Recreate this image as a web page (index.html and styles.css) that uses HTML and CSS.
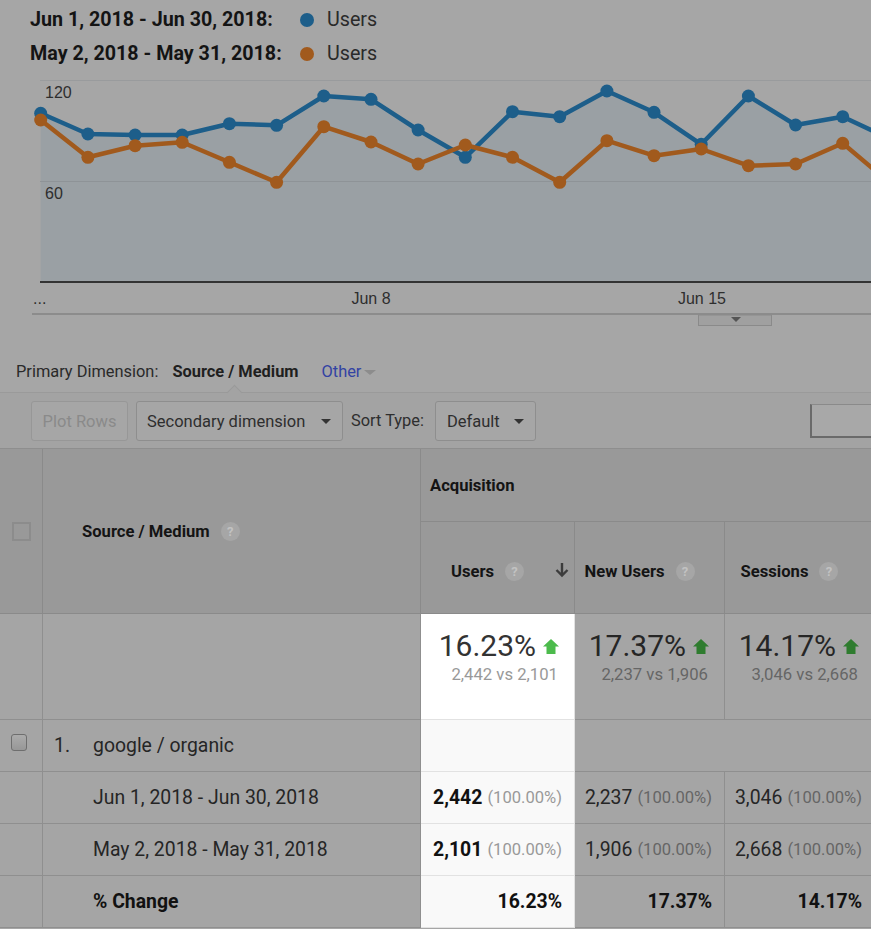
FILE: index.html
```html
<!DOCTYPE html>
<html>
<head>
<meta charset="utf-8">
<title>Acquisition report</title>
<link rel="stylesheet" href="styles.css">
</head>
<body>
<div class="page">
  <div class="legend">
    <div class="lg-label">Jun 1, 2018 - Jun 30, 2018:</div>
    <div class="lg-series"><span class="dot dot-blue"></span>Users</div>
    <div class="lg-label">May 2, 2018 - May 31, 2018:</div>
    <div class="lg-series"><span class="dot dot-orange"></span>Users</div>
  </div>

  <div class="chart">
    <svg class="chart-svg" width="871" height="260" viewBox="0 70 871 260" xmlns="http://www.w3.org/2000/svg">
      <line x1="40" y1="80.5" x2="871" y2="80.5" stroke="#999b9d" stroke-width="1"/>
      <path d="M40.7,282 L40.7,113.3 L87.9,134 L135.1,135 L182.2,135 L229.4,123.7 L276.6,125.3 L323.8,96 L371,99.3 L418.1,130 L465.3,157.3 L512.5,111.7 L559.7,116.7 L606.9,91 L654,112.3 L701.2,144.3 L748.4,96 L795.6,125 L842.7,116.7 L889.9,139 L889.9,282 Z" fill="#9aa0a4"/>
      <line x1="40" y1="181.5" x2="871" y2="181.5" stroke="#8e9397" stroke-width="1"/>
      <line x1="40" y1="282" x2="871" y2="282" stroke="#333333" stroke-width="2"/>
      <polyline fill="none" stroke="#1d5e8a" stroke-width="4.5" stroke-linejoin="round" points="40.7,113.3 87.9,134 135.1,135 182.2,135 229.4,123.7 276.6,125.3 323.8,96 371,99.3 418.1,130 465.3,157.3 512.5,111.7 559.7,116.7 606.9,91 654,112.3 701.2,144.3 748.4,96 795.6,125 842.7,116.7 889.9,139"/>
      <g fill="#1d5e8a">
        <circle cx="40.7" cy="113.3" r="6.5"/><circle cx="87.9" cy="134" r="6.5"/><circle cx="135.1" cy="135" r="6.5"/><circle cx="182.2" cy="135" r="6.5"/><circle cx="229.4" cy="123.7" r="6.5"/><circle cx="276.6" cy="125.3" r="6.5"/><circle cx="323.8" cy="96" r="6.5"/><circle cx="371" cy="99.3" r="6.5"/><circle cx="418.1" cy="130" r="6.5"/><circle cx="465.3" cy="157.3" r="6.5"/><circle cx="512.5" cy="111.7" r="6.5"/><circle cx="559.7" cy="116.7" r="6.5"/><circle cx="606.9" cy="91" r="6.5"/><circle cx="654" cy="112.3" r="6.5"/><circle cx="701.2" cy="144.3" r="6.5"/><circle cx="748.4" cy="96" r="6.5"/><circle cx="795.6" cy="125" r="6.5"/><circle cx="842.7" cy="116.7" r="6.5"/>
      </g>
      <polyline fill="none" stroke="#a15a1d" stroke-width="4.5" stroke-linejoin="round" points="40.7,120 87.9,157.3 135.1,145.7 182.2,142.3 229.4,162.3 276.6,182.3 323.8,126.7 371,142 418.1,164 465.3,145 512.5,157.3 559.7,182.3 606.9,140.7 654,155.7 701.2,149 748.4,165.7 795.6,164 842.7,143.3 889.9,183"/>
      <g fill="#a15a1d">
        <circle cx="40.7" cy="120" r="6.5"/><circle cx="87.9" cy="157.3" r="6.5"/><circle cx="135.1" cy="145.7" r="6.5"/><circle cx="182.2" cy="142.3" r="6.5"/><circle cx="229.4" cy="162.3" r="6.5"/><circle cx="276.6" cy="182.3" r="6.5"/><circle cx="323.8" cy="126.7" r="6.5"/><circle cx="371" cy="142" r="6.5"/><circle cx="418.1" cy="164" r="6.5"/><circle cx="465.3" cy="145" r="6.5"/><circle cx="512.5" cy="157.3" r="6.5"/><circle cx="559.7" cy="182.3" r="6.5"/><circle cx="606.9" cy="140.7" r="6.5"/><circle cx="654" cy="155.7" r="6.5"/><circle cx="701.2" cy="149" r="6.5"/><circle cx="748.4" cy="165.7" r="6.5"/><circle cx="795.6" cy="164" r="6.5"/><circle cx="842.7" cy="143.3" r="6.5"/>
      </g>
      <text class="axis" x="45" y="98">120</text>
      <text class="axis" x="45" y="199">60</text>
      <text class="axis" x="33" y="304">...</text>
      <text class="axis" x="371" y="304" text-anchor="middle">Jun 8</text>
      <text class="axis" x="702" y="304" text-anchor="middle">Jun 15</text>
      <line x1="32" y1="314" x2="871" y2="314" stroke="#8c8c8c" stroke-width="2"/>
      <rect x="698.5" y="315" width="73" height="10.5" fill="#a0a0a0" stroke="#8a8a8a" stroke-width="1"/>
      <polygon points="731,317 741,317 736,322" fill="#555555"/>
    </svg>
  </div>

  <div class="primary">
    <span class="pd-label">Primary Dimension:</span>
    <span class="pd-current">Source / Medium</span>
    <span class="pd-other">Other<span class="caret caret-light"></span></span>
    <span class="notch"></span>
  </div>

  <div class="toolbar">
    <button class="btn btn-disabled">Plot Rows</button>
    <button class="btn btn-select btn-secondary">Secondary dimension<span class="caret"></span></button>
    <span class="tb-label">Sort Type:</span>
    <button class="btn btn-select btn-default">Default<span class="caret"></span></button>
    <span class="search"></span>
  </div>

  <div class="tbl">
    <div class="cell hd h-cb"><span class="cbox"></span></div>
    <div class="cell hd h-dim">Source / Medium<span class="help">?</span></div>
    <div class="cell hd h-group">Acquisition</div>
    <div class="cell hd h-metric h-users">Users<span class="help">?</span>
      <svg class="sort-arrow" width="14" height="16" viewBox="0 0 14 16"><path d="M7 1 V13 M1.5 8 L7 13.5 L12.5 8" fill="none" stroke="#3c3c3c" stroke-width="2.4"/></svg>
    </div>
    <div class="cell hd h-metric">New Users<span class="help">?</span></div>
    <div class="cell hd h-metric">Sessions<span class="help">?</span></div>

    <div class="cell body"></div>
    <div class="cell body"></div>
    <div class="cell sum sel-top">
      <div class="big">16.23%<svg class="up up-bright" width="16" height="15" viewBox="0 0 16 15"><polygon points="8,0 16,7.5 12.5,7.5 12.5,15 3.5,15 3.5,7.5 0,7.5"/></svg></div>
      <div class="vs">2,442 vs 2,101</div>
    </div>
    <div class="cell sum body">
      <div class="big">17.37%<svg class="up" width="16" height="15" viewBox="0 0 16 15"><polygon points="8,0 16,7.5 12.5,7.5 12.5,15 3.5,15 3.5,7.5 0,7.5"/></svg></div>
      <div class="vs">2,237 vs 1,906</div>
    </div>
    <div class="cell sum body">
      <div class="big">14.17%<svg class="up" width="16" height="15" viewBox="0 0 16 15"><polygon points="8,0 16,7.5 12.5,7.5 12.5,15 3.5,15 3.5,7.5 0,7.5"/></svg></div>
      <div class="vs">3,046 vs 2,668</div>
    </div>

    <div class="cell body c-cb"><span class="rbox"></span></div>
    <div class="cell body dimtxt"><span class="idx">1.</span>google / organic</div>
    <div class="cell sel"></div>
    <div class="cell body span2"></div>

    <div class="cell body"></div>
    <div class="cell body dimtxt indent">Jun 1, 2018 - Jun 30, 2018</div>
    <div class="cell sel num"><b>2,442</b><span class="pct">(100.00%)</span></div>
    <div class="cell body num">2,237<span class="pct">(100.00%)</span></div>
    <div class="cell body num">3,046<span class="pct">(100.00%)</span></div>

    <div class="cell body"></div>
    <div class="cell body dimtxt indent">May 2, 2018 - May 31, 2018</div>
    <div class="cell sel num"><b>2,101</b><span class="pct">(100.00%)</span></div>
    <div class="cell body num">1,906<span class="pct">(100.00%)</span></div>
    <div class="cell body num">2,668<span class="pct">(100.00%)</span></div>

    <div class="cell body"></div>
    <div class="cell body dimtxt indent"><b>% Change</b></div>
    <div class="cell sel num"><b>16.23%</b></div>
    <div class="cell body num"><b>17.37%</b></div>
    <div class="cell body num"><b>14.17%</b></div>
  </div>
</div>
</body>
</html>
```

FILE: styles.css
```css
html, body {
  margin: 0;
  padding: 0;
  overflow: hidden;
  background: #a6a6a6;
}
body {
  font-family: Roboto, "Liberation Sans", Arial, sans-serif;
  color: #2a2a2a;
}
.page {
  width: 875px;
}

/* legend */
.legend {
  display: grid;
  grid-template-columns: 270px auto;
  padding: 3px 0 0 30px;
  height: 70px;
  box-sizing: border-box;
  font-size: 19.7px;
  line-height: 34px;
}
.lg-label {
  font-weight: 700;
  color: #141414;
}
.lg-series {
  display: flex;
  align-items: center;
  color: #2a2a2a;
}
.dot {
  width: 14px;
  height: 14px;
  border-radius: 50%;
  margin-right: 13px;
}
.dot-blue { background: #1d5e8a; }
.dot-orange { background: #a15a1d; }

/* chart */
.chart {
  height: 260px;
}
.chart-svg {
  display: block;
}
.axis {
  font-family: "Liberation Sans", Arial, sans-serif;
  font-size: 16px;
  fill: #2e2e2e;
}

/* primary dimension */
.primary {
  position: relative;
  height: 63px;
  box-sizing: border-box;
  padding: 0 0 10px 16px;
  display: flex;
  align-items: flex-end;
  font-size: 16.4px;
  line-height: 20px;
  border-bottom: 1px solid #9a9a9a;
}
.pd-label { color: #2a2a2a; }
.pd-current {
  margin-left: 14px;
  font-weight: 700;
  color: #1f1f1f;
}
.pd-other {
  margin-left: 23px;
  color: #3343a3;
  display: flex;
  align-items: center;
}
.caret {
  display: inline-block;
  width: 0;
  height: 0;
  border-left: 5px solid transparent;
  border-right: 5px solid transparent;
  border-top: 5px solid #333;
}
.caret-light {
  border-left-width: 6px;
  border-right-width: 6px;
  border-top-color: #8c8c8c;
  margin-left: 3px;
}
.notch {
  position: absolute;
  left: 229px;
  bottom: -6px;
  width: 10px;
  height: 10px;
  background: #a3a3a3;
  border-top: 1px solid #9a9a9a;
  border-left: 1px solid #9a9a9a;
  transform: rotate(45deg);
}

/* toolbar */
.toolbar {
  height: 56px;
  box-sizing: border-box;
  padding: 8px 0 0 31px;
  display: flex;
  align-items: flex-start;
  background: #a3a3a3;
  border-bottom: 1px solid #8e8e8e;
}
.btn {
  height: 40px;
  box-sizing: border-box;
  border: 1px solid #8e8e8e;
  border-radius: 3px;
  background: #a6a6a6;
  font-family: Roboto, "Liberation Sans", Arial, sans-serif;
  font-size: 16.5px;
  color: #2e2e2e;
  padding: 0 10px;
  display: flex;
  align-items: center;
}
.btn-disabled {
  width: 97px;
  justify-content: center;
  color: #8a8a8a;
  border-color: #979797;
}
.btn-select {
  justify-content: space-between;
}
.btn-secondary {
  width: 207px;
  margin-left: 8px;
  padding: 0 11px 0 10px;
}
.btn-default {
  width: 101px;
  margin-left: 11px;
  padding: 0 11px 0 11px;
}
.tb-label {
  margin-left: 8px;
  height: 40px;
  line-height: 40px;
  font-size: 16.4px;
  color: #2e2e2e;
}
.search {
  margin-left: auto;
  margin-top: 3px;
  width: 65px;
  height: 34px;
  box-sizing: border-box;
  background: #a8a8a8;
  border: 1px solid #8a8a8a;
  border-left: 2px solid #6a6a6a;
  border-bottom: 2px solid #6a6a6a;
}

/* table */
.tbl {
  display: grid;
  grid-template-columns: 43px 378px 154px 150px 150px;
  grid-template-rows: 73px 92px 106px 52px 52px 52px 52px;
}
.cell {
  box-sizing: border-box;
  border-right: 1px solid #8f8f8f;
  border-bottom: 1px solid #8f8f8f;
  display: flex;
  align-items: center;
  min-width: 0;
}
.hd {
  background: #999999;
  border-color: #8a8a8a;
  font-size: 16.6px;
  font-weight: 700;
  color: #141414;
}
.h-cb {
  grid-row: 1 / span 2;
  justify-content: center;
}
.cbox {
  width: 19px;
  height: 19px;
  box-sizing: border-box;
  border: 2px solid #8c8c8c;
}
.h-dim {
  grid-row: 1 / span 2;
  padding-left: 39px;
}
.h-group {
  grid-column: 3 / span 3;
  padding-left: 9px;
}
.h-metric {
  position: relative;
  justify-content: center;
  padding: 8px 20px 0 0;
}
.help {
  display: inline-flex;
  align-items: center;
  justify-content: center;
  width: 19px;
  height: 19px;
  border-radius: 50%;
  background: #a6a6a6;
  color: #c2c2c2;
  font-size: 13px;
  font-weight: 700;
  margin-left: 11px;
}
.sort-arrow {
  position: absolute;
  right: 5px;
  top: 40px;
}
.body {
  background: #a5a5a5;
}
.sel, .sel-top {
  border-color: #e2e2e2;
  border-left: 0;
}
.sel { background: #f9f9f9; }
.sel-top { background: #ffffff; }
.sum {
  flex-direction: column;
  align-items: flex-end;
  justify-content: flex-start;
  padding: 14px 15px 0 0;
}
.big {
  display: flex;
  align-items: center;
  font-size: 30px;
  line-height: 36px;
  color: #262626;
}
.sel-top .big { color: #333; }
.up {
  margin-left: 7px;
  fill: #2f7c2f;
}
.up-bright { fill: #4cbb4c; }
.vs {
  font-size: 16.7px;
  line-height: 22px;
  color: #666;
  padding-right: 1px;
}
.sel-top .vs { color: #999; }
.c-cb {
  justify-content: flex-start;
  padding: 0 0 6px 11px;
}
.rbox {
  width: 16px;
  height: 17px;
  box-sizing: border-box;
  border: 1px solid #6e6e6e;
  border-radius: 3px;
  background: linear-gradient(#ababab, #979797);
}
.dimtxt {
  font-size: 19.4px;
  color: #252525;
  padding-left: 11px;
}
.dimtxt b { color: #111; }
.idx {
  display: inline-block;
  width: 39px;
}
.indent { padding-left: 50px; }
.span2 { grid-column: 4 / span 2; }
.num {
  justify-content: flex-end;
  padding-right: 12px;
  font-size: 19.4px;
  color: #262626;
}
.num b { color: #111; }
.sel.num { color: #111; }
.pct {
  font-size: 16.6px;
  color: #666;
  margin-left: 5px;
}
.sel .pct { color: #999; }
```
